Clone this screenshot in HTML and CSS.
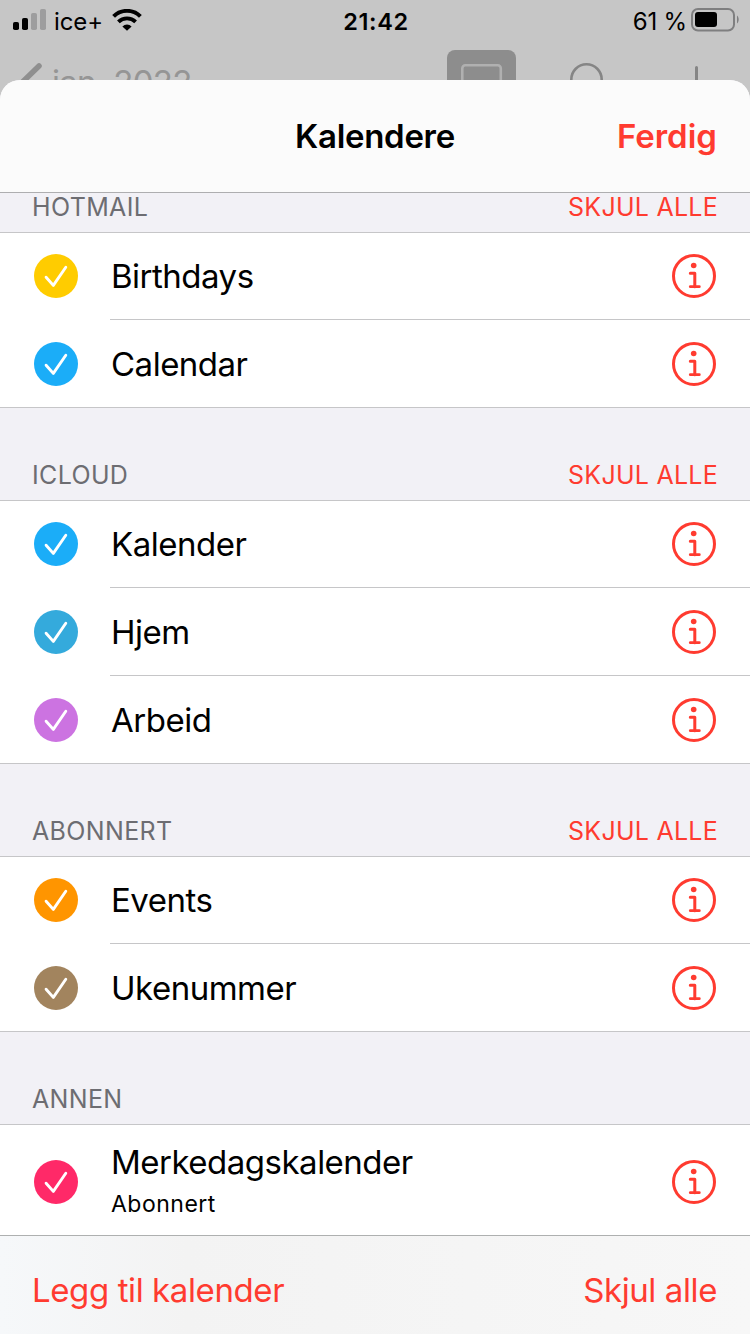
FILE: index.html
```html
<!DOCTYPE html>
<html lang="no">
<head>
  <meta charset="utf-8">
  <title>Kalendere</title>
  <link rel="stylesheet" href="styles.css">
</head>
<body>
  <svg class="defs" width="0" height="0">
    <symbol id="check" viewBox="0 0 44 44">
      <circle cx="22" cy="22" r="22" fill="currentColor"/>
      <path d="M12.1 23.2L19.3 31.4L31.8 13.2" fill="none" stroke="#fff" stroke-width="2.9" stroke-linecap="round" stroke-linejoin="round"/>
    </symbol>
    <symbol id="info" viewBox="0 0 44 44">
      <circle cx="22" cy="22" r="20.5" fill="none" stroke="currentColor" stroke-width="3"/>
      <circle cx="21.7" cy="11.5" r="2.8" fill="currentColor"/>
      <path d="M18.3 19.2H22.8V32.7" fill="none" stroke="currentColor" stroke-width="3" stroke-linecap="round" stroke-linejoin="round"/>
      <path d="M18.3 32.7H27.3" fill="none" stroke="currentColor" stroke-width="2.8" stroke-linecap="round"/>
    </symbol>
  </svg>

  <div class="behind">
    <div class="status">
      <div class="status-left">
        <svg width="34" height="22" viewBox="0 0 34 22">
          <rect x="0" y="13" width="6" height="8" rx="1.8"/>
          <rect x="9" y="9" width="6" height="12" rx="1.8"/>
          <rect x="18" y="4" width="6" height="17" rx="1.8" fill="#9d9d9e"/>
          <rect x="27" y="0" width="6" height="21" rx="1.8" fill="#9d9d9e"/>
        </svg>
        <span class="carrier">ice+</span>
        <svg class="wifi" width="30" height="22" viewBox="0 0 30 22">
          <path d="M1.6 7.4A19 19 0 0 1 28.4 7.4" fill="none" stroke="#000" stroke-width="4"/>
          <path d="M6.4 12.9A12.2 12.2 0 0 1 23.6 12.9" fill="none" stroke="#000" stroke-width="3.8"/>
          <path d="M15 21.8L10.4 17.4A6.8 6.8 0 0 1 19.6 17.4Z"/>
        </svg>
      </div>
      <span class="clock">21:42</span>
      <div class="status-right">
        <span class="percent">61 %</span>
        <svg width="48" height="24" viewBox="0 0 48 24">
          <rect x="1" y="1" width="42" height="21.5" rx="6" fill="none" stroke="#7f7f80" stroke-width="2"/>
          <rect x="4" y="4" width="22" height="15" rx="3"/>
          <path d="M46 7.5C48.2 9 48.2 14 46 15.5Z" fill="#7f7f80"/>
        </svg>
      </div>
    </div>
    <div class="nav">
      <svg class="back" width="26" height="40" viewBox="0 0 26 40"><path d="M22 4L5 20.5L22 37" fill="none" stroke="#8f8f8f" stroke-width="5.5" stroke-linecap="round"/></svg>
      <span class="month">jan. 2022</span>
      <svg class="view" width="69" height="60" viewBox="0 0 69 60">
        <rect width="69" height="60" rx="8" fill="#8d8d8d"/>
        <rect x="15.3" y="15.3" width="38.5" height="30" rx="3" fill="none" stroke="#b0b0b0" stroke-width="2.6"/>
      </svg>
      <svg class="search" width="44" height="44" viewBox="0 0 44 44"><circle cx="16.5" cy="16.5" r="15.2" fill="none" stroke="#858585" stroke-width="2.6"/></svg>
      <svg class="plus" width="40" height="40" viewBox="0 0 40 40"><path d="M20.5 2.5V38M2 20H38" fill="none" stroke="#858585" stroke-width="3" stroke-linecap="round"/></svg>
    </div>
  </div>

  <div class="sheet">
    <div class="sheet-header">
      <h1>Kalendere</h1>
      <a class="done">Ferdig</a>
    </div>

    <div class="content">
      <div class="section-title first"><span>HOTMAIL</span><a>SKJUL ALLE</a></div>
      <div class="list">
        <div class="row">
          <svg class="check yellow"><use href="#check"/></svg>
          <div class="cell"><span class="name">Birthdays</span><svg class="info"><use href="#info"/></svg></div>
        </div>
        <div class="row">
          <svg class="check blue"><use href="#check"/></svg>
          <div class="cell"><span class="name">Calendar</span><svg class="info"><use href="#info"/></svg></div>
        </div>
      </div>

      <div class="section-title"><span>ICLOUD</span><a>SKJUL ALLE</a></div>
      <div class="list">
        <div class="row">
          <svg class="check blue"><use href="#check"/></svg>
          <div class="cell"><span class="name">Kalender</span><svg class="info"><use href="#info"/></svg></div>
        </div>
        <div class="row">
          <svg class="check teal"><use href="#check"/></svg>
          <div class="cell"><span class="name">Hjem</span><svg class="info"><use href="#info"/></svg></div>
        </div>
        <div class="row">
          <svg class="check purple"><use href="#check"/></svg>
          <div class="cell"><span class="name">Arbeid</span><svg class="info"><use href="#info"/></svg></div>
        </div>
      </div>

      <div class="section-title"><span>ABONNERT</span><a>SKJUL ALLE</a></div>
      <div class="list">
        <div class="row">
          <svg class="check orange"><use href="#check"/></svg>
          <div class="cell"><span class="name">Events</span><svg class="info"><use href="#info"/></svg></div>
        </div>
        <div class="row">
          <svg class="check brown"><use href="#check"/></svg>
          <div class="cell"><span class="name">Ukenummer</span><svg class="info"><use href="#info"/></svg></div>
        </div>
      </div>

      <div class="section-title"><span>ANNEN</span></div>
      <div class="list">
        <div class="row tall">
          <svg class="check pink"><use href="#check"/></svg>
          <div class="cell">
            <div class="names">
              <span class="name">Merkedagskalender</span>
              <span class="sub">Abonnert</span>
            </div>
            <svg class="info"><use href="#info"/></svg>
          </div>
        </div>
      </div>
    </div>

    <div class="toolbar">
      <a class="add">Legg til kalender</a>
      <a class="hide">Skjul alle</a>
    </div>
  </div>
</body>
</html>
```
FILE: styles.css
```css
* {
  box-sizing: border-box;
}
body {
  margin: 0;
  width: 750px;
  height: 1334px;
  overflow: hidden;
  display: flex;
  flex-direction: column;
  background: #c6c6c6;
  font-family: Inter, "Liberation Sans", sans-serif;
  color: #000;
}
svg {
  display: block;
  flex-shrink: 0;
}
.defs {
  position: absolute;
}

/* dimmed calendar behind the sheet */
.behind {
  height: 80px;
  flex-shrink: 0;
}
.status {
  height: 40px;
  display: grid;
  grid-template-columns: 1fr auto 1fr;
  align-items: center;
  padding: 0 11px 0 13px;
  font-size: 24px;
}
.status-left, .status-right {
  display: flex;
  align-items: center;
}
.status-right {
  justify-content: flex-end;
}
.carrier {
  margin: 2px 0 0 7px;
  letter-spacing: -0.1px;
}
.wifi {
  margin-left: 9px;
}
.clock {
  margin-top: 2px;
  font-weight: 600;
  font-size: 23.5px;
  letter-spacing: 0.6px;
}
.percent {
  margin: 2px 4px 0 0;
  letter-spacing: -0.2px;
}
.nav {
  height: 40px;
  display: flex;
  align-items: flex-start;
  padding-left: 17px;
}
.back {
  margin-top: 22px;
}
.month {
  width: 250px;
  margin: 22px 0 0 9px;
  font-size: 33px;
  line-height: 40px;
  letter-spacing: -0.7px;
  height: 18px;
  color: #959595;
}
.view {
  margin: 10px 0 0 145px;
}
.search {
  margin: 23px 0 0 54px;
}
.plus {
  margin: 25px 0 0 62px;
}

.sheet {
  flex: 1;
  min-height: 0;
  display: flex;
  flex-direction: column;
  position: relative;
  overflow: hidden;
  border-radius: 20px 20px 0 0;
  background: #f2f1f6;
}
.sheet-header {
  height: 113px;
  flex-shrink: 0;
  display: grid;
  grid-template-columns: 1fr auto 1fr;
  align-items: center;
  padding: 0 33px;
  background: #fbfbfb;
  border-bottom: 1px solid #aeaeb0;
}
h1 {
  grid-column: 2;
  margin: 0;
  font-size: 33px;
  font-weight: 600;
  letter-spacing: -0.3px;
}
.done {
  justify-self: end;
  font-size: 33px;
  font-weight: 600;
}
a {
  color: #ff3b30;
}

.content {
  flex: 1;
  min-height: 0;
  overflow: hidden;
}
.section-title {
  height: 92px;
  display: flex;
  justify-content: space-between;
  align-items: flex-end;
  padding: 0 32px 10px;
  font-size: 25px;
  line-height: 30px;
  letter-spacing: 0.35px;
  color: #6d6d72;
}
.section-title a {
  letter-spacing: 0.25px;
}
.section-title.first {
  height: 39px;
}
.list {
  background: #fff;
  box-shadow: inset 0 1px #c6c6c8, inset 0 -1px #c6c6c8;
}
.row {
  height: 88px;
  display: flex;
  align-items: center;
  padding-left: 34px;
}
.check {
  width: 44px;
  height: 44px;
  margin-right: 32px;
}
.cell {
  flex: 1;
  height: 100%;
  display: flex;
  justify-content: space-between;
  align-items: center;
  padding: 0 34px 0 1px;
  box-shadow: inset 0 -1px #c6c6c8;
}
.name {
  font-size: 33px;
  line-height: 40px;
  letter-spacing: -0.5px;
}
.info {
  width: 44px;
  height: 44px;
  color: #ff3b30;
}
.row.tall {
  height: 116px;
}
.names {
  display: flex;
  flex-direction: column;
  padding-bottom: 3px;
}
.sub {
  font-size: 23px;
  line-height: 30px;
  letter-spacing: 0.5px;
  margin-top: 7px;
}
.yellow { color: #ffcc00; }
.blue { color: #1badf8; }
.teal { color: #34aadc; }
.purple { color: #cc73e1; }
.orange { color: #ff9500; }
.brown { color: #a2845e; }
.pink { color: #ff2968; }

.toolbar {
  height: 99px;
  flex-shrink: 0;
  display: flex;
  justify-content: space-between;
  padding: 34px 33px 0 32px;
  font-size: 33px;
  line-height: 40px;
  letter-spacing: -0.4px;
  background: linear-gradient(90deg, #f6f8fa, #f3f3f3 25%, #f7f7f7);
  border-top: 1px solid #aeb0b0;
}
```
